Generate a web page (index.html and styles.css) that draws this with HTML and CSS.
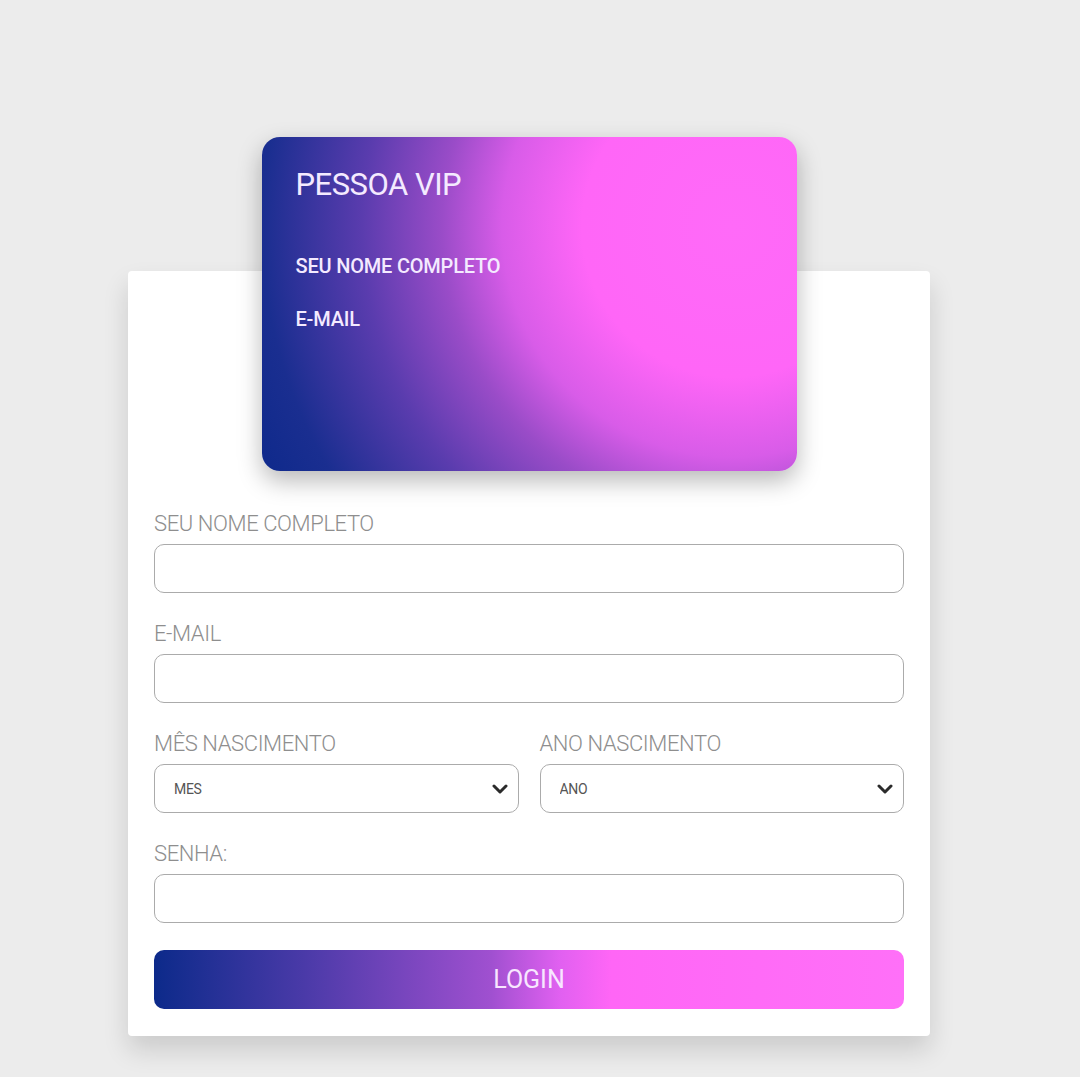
FILE: index.html
```html
<!DOCTYPE html>
<html lang="pt-BR">
<head>
<meta charset="utf-8">
<title>Pessoa VIP</title>
<link rel="stylesheet" href="styles.css">
</head>
<body>
<main class="page">
  <section class="panel">
    <div class="card">
      <h1 class="card-title">PESSOA VIP</h1>
      <p class="card-line">SEU NOME COMPLETO</p>
      <p class="card-line">E-MAIL</p>
    </div>
    <form class="form">
      <label class="field">
        <span class="label">SEU NOME COMPLETO</span>
        <input class="input" type="text">
      </label>
      <label class="field">
        <span class="label">E-MAIL</span>
        <input class="input" type="email">
      </label>
      <div class="row">
        <label class="field">
          <span class="label">MÊS NASCIMENTO</span>
          <span class="select-wrap">
            <select class="select"><option>MES</option></select>
            <svg class="chev" viewBox="0 0 16 12" width="16" height="12"><path d="M2 3 L8 9 L14 3" fill="none" stroke="#2b2b2b" stroke-width="3" stroke-linecap="round" stroke-linejoin="round"/></svg>
          </span>
        </label>
        <label class="field">
          <span class="label">ANO NASCIMENTO</span>
          <span class="select-wrap">
            <select class="select"><option>ANO</option></select>
            <svg class="chev" viewBox="0 0 16 12" width="16" height="12"><path d="M2 3 L8 9 L14 3" fill="none" stroke="#2b2b2b" stroke-width="3" stroke-linecap="round" stroke-linejoin="round"/></svg>
          </span>
        </label>
      </div>
      <label class="field">
        <span class="label">SENHA:</span>
        <input class="input" type="password">
      </label>
      <button class="btn" type="button">LOGIN</button>
    </form>
  </section>
</main>
</body>
</html>
```

FILE: styles.css
```css
* { box-sizing: border-box; }
html, body { margin: 0; padding: 0; }
body {
  background: #ececec;
  font-family: Roboto, "Liberation Sans", sans-serif;
  height: 1077px;
  overflow: hidden;
}
.page {
  padding-top: 271px;
  padding-left: 128px;
}
.panel {
  width: 802px;
  background: #ffffff;
  border-radius: 4px;
  box-shadow: 0 14px 26px rgba(0,0,0,0.14);
  padding: 0 26px 27px 26px;
  display: flex;
  flex-direction: column;
}
.card {
  align-self: center;
  margin-top: -134px;
  width: 535px;
  height: 334px;
  border-radius: 18px;
  background: radial-gradient(circle at 470px 90px, #ff6af8 0, #ff66f7 150px, #d85ce8 230px, #9a4cc8 290px, #5a3cae 370px, #1a2e90 470px, #102a8c 520px);
  box-shadow: 0 10px 24px rgba(0,0,0,0.28);
  padding: 30px 34px;
  color: #f4eaff;
}
.card-title {
  margin: 0;
  font-weight: 400;
  font-size: 31px;
  line-height: 36px;
  letter-spacing: -0.5px;
}
.card-line {
  margin: 0;
  font-weight: 500;
  font-size: 20px;
  letter-spacing: -0.2px;
  line-height: 24px;
}
.card-title + .card-line { margin-top: 51px; }
.card-line + .card-line { margin-top: 29px; }
.form {
  margin-top: 40px;
  display: flex;
  flex-direction: column;
  gap: 28px;
}
.field {
  display: flex;
  flex-direction: column;
  gap: 7px;
  flex: 1;
}
.label {
  font-weight: 300;
  font-size: 22px;
  line-height: 26px;
  color: #8e8e8e;
  letter-spacing: -0.4px;
}
.input, .select {
  height: 49px;
  width: 100%;
  border: 1.5px solid #ababab;
  border-radius: 10px;
  background: #fff;
  font-family: inherit;
}
.row {
  display: flex;
  gap: 21px;
}
.select-wrap {
  position: relative;
  display: block;
}
.select {
  appearance: none;
  -webkit-appearance: none;
  padding: 0 0 0 19px;
  font-size: 14px;
  color: #555;
  letter-spacing: -0.3px;
}
.chev {
  position: absolute;
  right: 11px;
  top: 19px;
  pointer-events: none;
}
.btn {
  margin-top: -1px;
  height: 59px;
  border: 0;
  border-radius: 10px;
  background: linear-gradient(90deg, #0c2a8a 0%, #4a3aa8 20%, #a050d0 45%, #e060f0 54%, #ff66f6 61%, #ff70f8 100%);
  color: #f8e6ff;
  font-family: inherit;
  font-size: 25px;
  font-weight: 400;
  letter-spacing: 0;
}
```
